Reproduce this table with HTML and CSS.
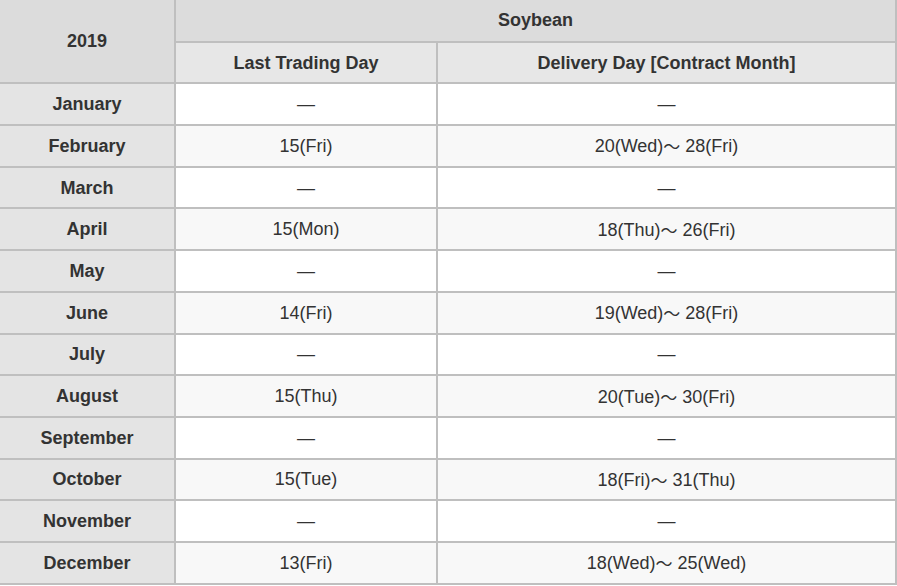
FILE: index.html
```html
<!DOCTYPE html>
<html lang="en">
<head>
<meta charset="utf-8">
<title>Soybean 2019</title>
<link rel="stylesheet" href="styles.css">
</head>
<body>
<table class="cal">
  <colgroup>
    <col class="c1"><col class="c2"><col class="c3">
  </colgroup>
  <thead>
    <tr>
      <th rowspan="2" class="year">2019</th>
      <th colspan="2" class="top">Soybean</th>
    </tr>
    <tr>
      <th class="sub">Last Trading Day</th>
      <th class="sub">Delivery Day [Contract Month]</th>
    </tr>
  </thead>
  <tbody>
    <tr><th>January</th><td>—</td><td>—</td></tr>
    <tr><th>February</th><td>15(Fri)</td><td>20(Wed)<span class="wave">〜</span> 28(Fri)</td></tr>
    <tr><th>March</th><td>—</td><td>—</td></tr>
    <tr><th>April</th><td>15(Mon)</td><td>18(Thu)<span class="wave">〜</span> 26(Fri)</td></tr>
    <tr><th>May</th><td>—</td><td>—</td></tr>
    <tr><th>June</th><td>14(Fri)</td><td>19(Wed)<span class="wave">〜</span> 28(Fri)</td></tr>
    <tr><th>July</th><td>—</td><td>—</td></tr>
    <tr><th>August</th><td>15(Thu)</td><td>20(Tue)<span class="wave">〜</span> 30(Fri)</td></tr>
    <tr><th>September</th><td>—</td><td>—</td></tr>
    <tr><th>October</th><td>15(Tue)</td><td>18(Fri)<span class="wave">〜</span> 31(Thu)</td></tr>
    <tr><th>November</th><td>—</td><td>—</td></tr>
    <tr><th>December</th><td>13(Fri)</td><td>18(Wed)<span class="wave">〜</span> 25(Wed)</td></tr>
  </tbody>
</table>
</body>
</html>
```
FILE: styles.css
```css
html, body {
  margin: 0;
  padding: 0;
  background: #ffffff;
}
.cal {
  border-collapse: collapse;
  width: 897px;
  font-family: "Liberation Sans", Arial, sans-serif;
  font-size: 18px;
  color: #333333;
  table-layout: fixed;
}
.c1 { width: 175px; }
.c2 { width: 262px; }
.cal th, .cal td {
  border: 2px solid #bfbfbf;
  text-align: center;
  vertical-align: middle;
  padding: 0;
  line-height: 20px;
}
.cal tr { height: 41.7px; }
.cal tr > :first-child { border-left: none; }
.cal thead tr:first-child > * { border-top: none; }
.cal th { font-weight: bold; }
.cal .year, .cal .top { background: #dcdcdc; }
.cal .sub { background: #e7e7e7; }
.cal tbody th { background: #e4e4e4; }
.cal tbody td { background: #ffffff; font-weight: normal; }
.cal tbody tr:nth-child(even) td { background: #f8f8f8; }
.wave {
  font-family: "Noto Sans CJK JP", sans-serif;
  font-size: 17px;
  display: inline-block;
  vertical-align: baseline;
  position: relative;
  top: 1px;
}
```
